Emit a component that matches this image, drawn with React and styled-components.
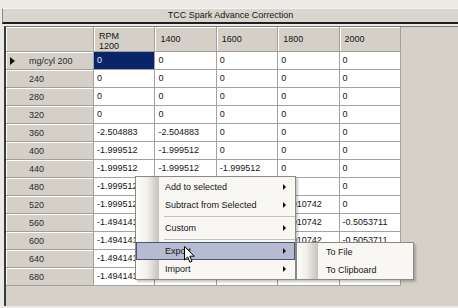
import React from 'react'
import styled, { createGlobalStyle } from 'styled-components'

const GlobalStyle = createGlobalStyle`
  html, body { margin:0; padding:0; background:#ebe9e5; overflow:hidden; }
  body { font-family:"Liberation Sans", Arial, sans-serif; font-size:9px; color:#141414; }
`

const Window = styled.div`
  position:relative;
  width:458px;
  height:308px;
  box-sizing:border-box;
  padding-top:8px;
  background:#ebe9e5;
`
const TitleBar = styled.div`
  margin-left:2px;
  height:13px;
  line-height:13px;
  text-align:center;
  background:#d8d5ce;
  border-top:1px solid #f3f2ee;
  border-left:1px solid #8d8a84;
  border-bottom:2px solid #1e1e1e;
`
const Panel = styled.div`
  margin:2px 0 0 4px;
  height:279px;
  background:#d5d1c9;
  border-left:2px solid #3a3a3a;
  border-top:1px solid #7d7a74;
`
const Table = styled.div`
  display:grid;
  grid-template-columns:88px repeat(5, 61.4px);
  grid-auto-rows:18px;
  grid-template-rows:25px;
`
const Corner = styled.div`
  box-sizing:border-box;
  background:#d4d0c8;
  border-right:1px solid #a29f98;
  border-bottom:1px solid #a29f98;
  box-shadow:inset 1px 1px 0 #fff;
`
const ColHead = styled.div`
  box-sizing:border-box;
  background:#d4d0c8;
  border-right:1px solid #a29f98;
  border-bottom:1px solid #a29f98;
  box-shadow:inset 1px 1px 0 #fff;
  padding:${({ $two }) => ($two ? '4px 0 0 5px' : '0 0 0 5px')};
  display:flex;
  flex-direction:column;
  justify-content:${({ $two }) => ($two ? 'flex-start' : 'center')};
  line-height:10px;
`
const RowHead = styled.div`
  box-sizing:border-box;
  background:#d4d0c8;
  border-right:1px solid #a29f98;
  border-bottom:1px solid #a29f98;
  box-shadow:inset 1px 1px 0 #fff;
  display:flex;
  align-items:center;
  padding-left:4px;
  color:#2a2a2a;
`
const Marker = styled.span`
  width:19px;
  display:flex;
  align-items:center;
  &::before {
    content:'';
    display:${({ $on }) => ($on ? 'block' : 'none')};
    border-top:4px solid transparent;
    border-bottom:4px solid transparent;
    border-left:5px solid #111;
  }
`
const Cell = styled.div`
  box-sizing:border-box;
  background:${({ $sel }) => ($sel ? '#0a246a' : '#fff')};
  color:${({ $sel }) => ($sel ? '#e8eeff' : '#141414')};
  border-right:1px solid #a3a3a3;
  border-bottom:1px solid #a3a3a3;
  padding-left:3px;
  line-height:17px;
  white-space:nowrap;
  overflow:hidden;
`
const Menu = styled.div`
  position:absolute;
  left:${({ $x }) => $x}px;
  top:${({ $y }) => $y}px;
  width:${({ $w }) => $w}px;
  box-sizing:border-box;
  padding:${({ $pad }) => $pad}px 0;
  border:1px solid #8c8982;
  box-shadow:2px 2px 2px rgba(0,0,0,0.22);
  background:linear-gradient(to right, #fdfdfc 0px, #f1f0ec ${({ $g }) => $g - 12}px, #c6c3bb ${({ $g }) => $g}px, #f8f7f4 ${({ $g }) => $g}px);
`
const Item = styled.div`
  box-sizing:border-box;
  height:18px;
  display:flex;
  align-items:center;
  justify-content:space-between;
  padding:0 8px 0 28px;
  border:1px solid ${({ $hot }) => ($hot ? '#4a5677' : 'transparent')};
  background:${({ $hot }) => ($hot ? '#b5bcd1' : 'transparent')};
  color:#141414;
`
const Arrow = styled.span`
  border-top:3px solid transparent;
  border-bottom:3px solid transparent;
  border-left:3px solid #111;
`
const Separator = styled.div`
  height:5px;
  display:flex;
  align-items:center;
  margin-left:28px;
  &::after { content:''; flex:1; height:1px; background:#c5c2b8; }
`
const Cursor = styled.svg`
  position:absolute;
  left:184px;
  top:246px;
`

const cols = ['1200', '1400', '1600', '1800', '2000']
const a = '-2.504883', b = '-1.999512', c = '-1.494141', d = '-1.010742', e = '-0.5053711'
const rows = [
  ['mg/cyl 200', ['0', '0', '0', '0', '0']],
  ['240', ['0', '0', '0', '0', '0']],
  ['280', ['0', '0', '0', '0', '0']],
  ['320', ['0', '0', '0', '0', '0']],
  ['360', [a, a, '0', '0', '0']],
  ['400', [b, b, '0', '0', '0']],
  ['440', [b, b, b, '0', '0']],
  ['480', [b, b, b, '0', '0']],
  ['520', [b, b, b, d, '0']],
  ['560', [c, c, c, d, e]],
  ['600', [c, c, c, d, e]],
  ['640', [c, c, c, d, e]],
  ['680', [c, c, c, d, e]],
]

const App = () => (
  <Window>
    <GlobalStyle />
    <TitleBar>TCC Spark Advance Correction</TitleBar>
    <Panel>
      <Table>
        <Corner />
        {cols.map((col, i) => (
          <ColHead key={col} $two={i === 0}>
            {i === 0 && <span>RPM</span>}
            <span>{col}</span>
          </ColHead>
        ))}
        {rows.map(([label, vals], r) => (
          <React.Fragment key={label}>
            <RowHead>
              <Marker $on={r === 0} />
              {label}
            </RowHead>
            {vals.map((v, i) => (
              <Cell key={i} $sel={r === 0 && i === 0}>{v}</Cell>
            ))}
          </React.Fragment>
        ))}
      </Table>
    </Panel>

    <Menu $x={135} $y={176} $w={161} $pad={1} $g={23}>
      <Item>Add to selected<Arrow /></Item>
      <Item>Subtract from Selected<Arrow /></Item>
      <Separator />
      <Item>Custom<Arrow /></Item>
      <Separator />
      <Item $hot>Export<Arrow /></Item>
      <Item>Import<Arrow /></Item>
    </Menu>

    <Menu $x={296} $y={242} $w={118} $pad={0} $g={21}>
      <Item>To File</Item>
      <Item>To Clipboard</Item>
    </Menu>

    <Cursor width="12" height="18" viewBox="0 0 12 18">
      <path d="M0.5 0.5 L0.5 14 L3.7 10.9 L5.9 16.2 L8 15.3 L5.8 10.2 L10.3 10.2 Z" fill="#fff" stroke="#000" strokeWidth="1" strokeLinejoin="round" />
    </Cursor>
  </Window>
)

export default App
